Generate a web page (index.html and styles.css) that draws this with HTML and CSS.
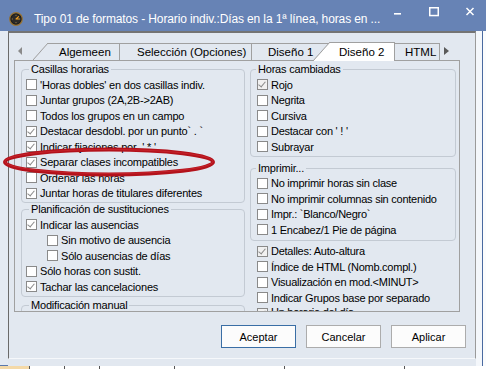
FILE: index.html
```html
<!doctype html>
<html lang="es">
  <head>
    <meta charset="UTF-8" />
    <title>Tipo 01 de formatos</title>
    <link rel="stylesheet" href="styles.css">
  </head>

  <body>
    <div class="window">
      <div class="titlebar">
        <svg class="app-icon" width="14" height="14" viewBox="0 0 14 14">
          <circle cx="7" cy="7" r="6.3" fill="#1d1d1d" stroke="#9a7434" stroke-width="1.2" />
          <circle cx="7" cy="7" r="4.6" fill="#2c2a28" />
          <path d="M7 2.8v1M7 10.2v1M2.8 7h1M10.2 7h1" stroke="#c9a25a" stroke-width="0.8" />
          <path d="M7 7L9.6 4.6M7 7h3" stroke="#f2a020" stroke-width="1.1" stroke-linecap="round" />
        </svg>
        <span class="title">Tipo 01 de formatos - Horario indiv.:Días en la 1ª línea, horas en ...</span>
        <div class="controls">
          <span class="ctl">
            <svg width="10" height="10" viewBox="0 0 10 10"><rect x="1" y="6" width="7" height="1.6" fill="#fff" /></svg>
          </span>
          <span class="ctl">
            <svg width="10" height="10" viewBox="0 0 10 10"><rect x="0.75" y="0.75" width="8.5" height="7.8" fill="none" stroke="#fff" stroke-width="1.5" /></svg>
          </span>
          <span class="ctl">
            <svg width="10" height="10" viewBox="0 0 10 10"><path d="M1.5 1l7 7M8.5 1l-7 7" stroke="#fff" stroke-width="1.5" /></svg>
          </span>
        </div>
      </div>

      <div class="main">
        <div class="frame-left"></div>
        <div class="client">
          <div class="tabs">
            <span class="arrow-left"></span>
            <span class="slant"></span>
            <span class="tab tab-general">Algemeen</span>
            <span class="tab tab-selection">Selección (Opciones)</span>
            <span class="tab tab-design1">Diseño 1</span>
            <span class="slant slant-active"></span>
            <span class="tab tab-active">Diseño 2</span>
            <span class="tab tab-html">HTML</span>
            <span class="arrow-right"></span>
          </div>

          <div class="panel">
            <div class="column column-left">
              <fieldset class="group group-cells">
                <legend>Casillas horarias</legend>
                <label class="row"><span class="cb"></span>'Horas dobles' en dos casillas indiv.</label>
                <label class="row"><span class="cb"></span>Juntar grupos (2A,2B-&gt;2AB)</label>
                <label class="row"><span class="cb"></span>Todos los grupos en un campo</label>
                <label class="row"><span class="cb checked"></span>Destacar desdobl. por un punto` . `</label>
                <label class="row"><span class="cb checked"></span>Indicar fijaciones por&nbsp; ' * '</label>
                <label class="row"><span class="cb checked"></span>Separar clases incompatibles</label>
                <label class="row"><span class="cb"></span>Ordenar las horas</label>
                <label class="row"><span class="cb checked"></span>Juntar horas de titulares diferentes</label>
              </fieldset>

              <fieldset class="group group-subst">
                <legend>Planificación de sustituciones</legend>
                <label class="row"><span class="cb checked"></span>Indicar las ausencias</label>
                <label class="row row-indent"><span class="cb"></span>Sin motivo de ausencia</label>
                <label class="row row-indent"><span class="cb"></span>Sólo ausencias de días</label>
                <label class="row"><span class="cb"></span>Sólo horas con sustit.</label>
                <label class="row"><span class="cb checked"></span>Tachar las cancelaciones</label>
              </fieldset>

              <fieldset class="group group-manual">
                <legend>Modificación manual</legend>
              </fieldset>
            </div>

            <div class="column column-right">
              <fieldset class="group group-changed">
                <legend>Horas cambiadas</legend>
                <label class="row"><span class="cb checked grey"></span>Rojo</label>
                <label class="row"><span class="cb"></span>Negrita</label>
                <label class="row"><span class="cb"></span>Cursiva</label>
                <label class="row"><span class="cb"></span>Destacar con ' ! '</label>
                <label class="row"><span class="cb"></span>Subrayar</label>
              </fieldset>

              <fieldset class="group group-print">
                <legend>Imprimir...</legend>
                <label class="row"><span class="cb"></span>No imprimir horas sin clase</label>
                <label class="row"><span class="cb"></span>No imprimir columnas sin contenido</label>
                <label class="row"><span class="cb"></span>Impr.: `Blanco/Negro`</label>
                <label class="row"><span class="cb"></span>1 Encabez/1 Pie de página</label>
              </fieldset>

              <div class="loose">
                <label class="row"><span class="cb checked grey"></span>Detalles: Auto-altura</label>
                <label class="row"><span class="cb"></span>Índice de HTML (Nomb.compl.)</label>
                <label class="row"><span class="cb"></span>Visualización en mod.&lt;MINUT&gt;</label>
                <label class="row"><span class="cb"></span>Indicar Grupos base por separado</label>
                <label class="row row-clipped"><span class="cb checked grey"></span>Un horario del día</label>
              </div>
            </div>
          </div>

          <div class="buttons">
            <button class="btn btn-default">Aceptar</button>
            <button class="btn">Cancelar</button>
            <button class="btn">Aplicar</button>
          </div>
        </div>
        <div class="frame-right">
          <div class="edge"></div>
          <div class="behind"></div>
        </div>
      </div>

      <div class="app-strip">
        <span class="cell cell-orange"></span>
        <span class="cell cell-a"></span>
        <span class="cell cell-b"></span>
        <span class="cell cell-c"></span>
        <span class="cell cell-d"></span>
        <span class="cell cell-e"></span>
      </div>

      <svg class="mark" width="216" height="32" viewBox="0 0 216 32">
        <ellipse cx="108" cy="16" rx="104" ry="12.5" fill="none" stroke="#b3121b" stroke-width="4" />
        <ellipse cx="108" cy="15.5" rx="104" ry="12" fill="none" stroke="#d8343c" stroke-width="1" opacity="0.5" />
      </svg>
    </div>
  </body>
</html>
```

FILE: styles.css
```css
:root {
  --title-bg: #6783b5;
  --dialog-bg: #e2e8f0;
  --line: #a0a0a0;
  --group-line: #c3cad3;
  --text: #000000;
}

* {
  margin: 0;
  padding: 0;
  box-sizing: border-box;
}

body {
  width: 486px;
  height: 369px;
  overflow: hidden;
  background: var(--dialog-bg);
  font-family: 'Liberation Sans', Arial, sans-serif;
  font-size: 11px;
  color: var(--text);
}

.window {
  position: relative;
  width: 486px;
  height: 369px;
  display: flex;
  flex-direction: column;
}

/* title bar */

.titlebar {
  height: 31px;
  flex: none;
  display: flex;
  align-items: flex-start;
  background: var(--title-bg);
  color: #fff;
}

.app-icon {
  margin: 12px 0 0 9px;
  flex: none;
}

.title {
  margin: 12px 0 0 11px;
  font-size: 12px;
  line-height: 15px;
  letter-spacing: -0.12px;
  white-space: nowrap;
  flex: none;
}

.controls {
  display: flex;
  flex: none;
  margin-left: auto;
  margin-right: 2px;
}

.ctl {
  width: 36px;
  height: 24px;
  display: flex;
  align-items: center;
  justify-content: center;
}

/* body */

.main {
  height: 335px;
  flex: none;
  display: flex;
}

.frame-left {
  width: 8px;
  background: #e4eaf2;
  border-bottom: 1px solid #5a78ac;
}

.client {
  width: 468px;
  height: 328px;
  background: var(--dialog-bg);
  border-left: 1px solid #6a6a6a;
  border-top: 2px solid #747474;
  border-right: 1px solid #9a9a9a;
  border-bottom: 1px solid #f6f8fb;
  display: flex;
  flex-direction: column;
}

.frame-right {
  flex: 1;
  display: flex;
}

.edge {
  width: 7px;
  background: #f4f7fb;
  border-right: 1px solid #4a6aa0;
}

.behind {
  flex: 1;
  background: #fbfcfd;
}

/* tabs */

.tabs {
  margin-top: 9px;
  height: 18px;
  display: flex;
  align-items: flex-end;
  padding-left: 8px;
}

.arrow-left {
  width: 0;
  height: 0;
  align-self: center;
  margin-right: 11px;
  border-right: 4px solid #8a8a8a;
  border-top: 4px solid transparent;
  border-bottom: 4px solid transparent;
  margin-left: 1px;
}

.arrow-right {
  width: 0;
  height: 0;
  align-self: center;
  margin-left: 4px;
  border-left: 5px solid #5a5a5a;
  border-top: 4px solid transparent;
  border-bottom: 4px solid transparent;
}

.slant {
  width: 15px;
  height: 17px;
  flex: none;
  background: linear-gradient(to bottom right, transparent calc(50% - 0.8px), var(--line) 50%, transparent calc(50% + 0.8px));
}

.tab {
  height: 17px;
  flex: none;
  border-top: 1px solid var(--line);
  border-right: 1px solid var(--line);
  line-height: 16px;
  font-size: 11.5px;
  white-space: nowrap;
  overflow: hidden;
}

.tab-general {
  width: 72px;
  padding-left: 11px;
}

.tab-selection {
  width: 132px;
  padding-left: 17px;
}

.tab-design1 {
  width: 78px;
  padding-left: 16px;
  border-right: none;
}

.slant-active {
  position: relative;
  z-index: 1;
  width: 17px;
  height: 19px;
  margin-left: -17px;
  margin-bottom: -1px;
  background: linear-gradient(to bottom right, transparent calc(50% - 0.8px), var(--line) 50%, #fff calc(50% + 0.8px));
}

.tab-active {
  position: relative;
  z-index: 1;
  width: 65px;
  height: 19px;
  margin-bottom: -1px;
  padding-left: 9px;
  line-height: 18px;
  background: #fff;
}

.tab-html {
  width: 45px;
  padding-left: 10px;
}

/* page */

.panel {
  margin-left: 5px;
  width: 446px;
  height: 252px;
  border: 1px solid var(--line);
  padding-top: 2px;
  display: flex;
  overflow: hidden;
}

.column {
  display: flex;
  flex-direction: column;
}

.column-left {
  margin-left: 6px;
  width: 224px;
}

.column-right {
  margin-left: 5px;
  width: 206px;
}

.group {
  border: 1px solid var(--group-line);
  border-radius: 4px;
  padding: 1px 0 1px 4px;
  min-width: 0;
}

.group legend {
  line-height: 13px;
  padding: 0 2px;
  margin-left: 3px;
  letter-spacing: -0.2px;
}

.column-right .group {
  padding-left: 6px;
}

.column-right .group legend {
  margin-left: -1px;
}

.group-manual {
  margin-top: 2px;
  height: 30px;
}

.group-print {
  margin-top: 5px;
  padding-bottom: 2px;
}

.loose {
  margin-top: 3px;
  padding-left: 7px;
}

.row {
  height: 15.5px;
  display: flex;
  align-items: center;
  white-space: nowrap;
  letter-spacing: -0.2px;
}

.column-right .row {
  letter-spacing: -0.25px;
}

.row-indent {
  padding-left: 21px;
}

.row-clipped {
  height: 10px;
  align-items: flex-start;
  overflow: hidden;
}

.cb {
  width: 11px;
  height: 11px;
  flex: none;
  margin-right: 3px;
  border: 1px solid #8a8a8a;
  background: #fff;
  position: relative;
}

.row-clipped .cb {
  margin-top: 2px;
}

.cb.checked::after {
  content: '';
  position: absolute;
  left: 2px;
  top: 0;
  width: 3px;
  height: 6px;
  border-right: 1.5px solid #8a8a8a;
  border-bottom: 1.5px solid #8a8a8a;
  transform: rotate(40deg);
}

.cb.grey {
  background: #f1f1f1;
}

/* buttons */

.buttons {
  margin-top: 13px;
  display: flex;
  justify-content: flex-end;
  gap: 10px;
  padding-right: 9px;
}

.btn {
  width: 75px;
  height: 23px;
  font-family: 'Liberation Sans', Arial, sans-serif;
  font-size: 11px;
  color: #000;
  background: #fcfcfc;
  border: 1px solid #acacac;
}

.btn-default {
  border-color: #3a6ea5;
}

/* whatever sits behind the dialog */

.app-strip {
  flex: 1;
  display: flex;
  background: #fff;
}

.cell {
  border-right: 1px solid #555;
}

.cell-orange {
  width: 30px;
  background: #f4d9a8;
}

.cell-a {
  width: 35px;
}

.cell-b {
  width: 35px;
}

.cell-c {
  width: 75px;
}

.cell-d {
  width: 110px;
}

.cell-e {
  width: 120px;
}

/* red annotation over the options */

.mark {
  position: absolute;
  left: 1px;
  top: 146px;
}
```
